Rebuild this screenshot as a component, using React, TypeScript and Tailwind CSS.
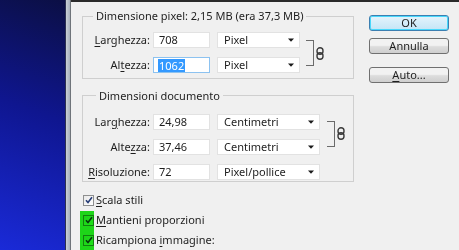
import type { ReactNode } from 'react'

const font = { fontFamily: '"Noto Sans", "Open Sans", sans-serif' }

function U({ children }: { children: ReactNode }) {
  return <span className="underline underline-offset-[2px] decoration-[1px]">{children}</span>
}

function ChainIcon() {
  return (
    <svg width="8" height="13" viewBox="0 0 8 13" className="shrink-0">
      <rect x="1" y="0.8" width="6" height="6.4" rx="3" fill="none" stroke="#3a3a3a" strokeWidth="1.4" />
      <rect x="1" y="5.8" width="6" height="6.4" rx="3" fill="none" stroke="#3a3a3a" strokeWidth="1.4" />
    </svg>
  )
}

function Select({ value, w }: { value: string, w: string }) {
  return (
    <div className={`${w} h-[16px] bg-white border border-[#e2e2e2] flex items-center pl-[6px] pr-[5px] justify-between`}>
      <span>{value}</span>
      <svg width="6" height="4" viewBox="0 0 6 4"><path d="M0 0.5h6L3 3.8z" fill="#1a1a1a" /></svg>
    </div>
  )
}

function Input({ value, focused }: { value: string, focused?: boolean }) {
  return (
    <div className={`w-[57px] h-[16px] bg-white border flex items-center pl-[4px] ${focused ? 'border-[#8cc2f0]' : 'border-[#e2e2e2]'}`}>
      {focused
        ? <span className="bg-[#3399ff] text-white px-[1px] leading-[13px]">{value}</span>
        : <span className="px-[1px]">{value}</span>}
    </div>
  )
}

function Row({ label, value, unit, selectW, focused }: { label: ReactNode, value: string, unit: string, selectW: string, focused?: boolean }) {
  return (
    <div className="flex items-center h-[16px]">
      <div className="w-[70px] text-right pr-[3px]">{label}</div>
      <Input value={value} focused={focused} />
      <div className="w-[7px]" />
      <Select value={unit} w={selectW} />
    </div>
  )
}

function Bracket() {
  return <div className="w-[8px] h-[26px] border-t border-r border-b border-[#6b6b6b]" />
}

function Check({ label }: { label: ReactNode }) {
  return (
    <div className="flex items-center h-[20px]">
      <div className="w-[11px] h-[11px] border border-[#8e8f8f] bg-[linear-gradient(135deg,#e8e8e8,#ffffff)] flex items-center justify-center ml-[1px]">
        <svg width="8" height="8" viewBox="0 0 8 8"><path d="M1 4.2 3 6.5 7 1.2" fill="none" stroke="#263c76" strokeWidth="1.6" /></svg>
      </div>
      <span className="ml-[2px]">{label}</span>
    </div>
  )
}

function Button({ children, primary }: { children: ReactNode, primary?: boolean }) {
  return (
    <div
      className={`h-[16px] w-[80px] rounded-[3px] border flex items-center justify-center ${primary
        ? 'border-[#3c7fb1] bg-[linear-gradient(#e5f4fc,#c4e5f6)] shadow-[inset_0_0_0_1px_#48d8fb]'
        : 'border-[#707070] bg-[linear-gradient(#f2f2f2_45%,#dddddd_55%,#cfcfcf)]'}`}
    >
      {children}
    </div>
  )
}

export default function App() {
  return (
    <div className="flex h-[250px] w-[459px] overflow-hidden text-[11px] leading-[14px] text-[#1e1e1e]" style={font}>
      <div className="w-[65px] bg-[linear-gradient(200deg,#0b0f44_0%,#0f1690_45%,#1a2ad8_100%)]" />
      <div className="w-[6px] flex">
        <div className="w-[1px] bg-[#2c3050]" />
        <div className="w-[4px] bg-[linear-gradient(90deg,#c9d0d8,#a7b0bb)]" />
        <div className="w-[1px] bg-[#6f747a]" />
      </div>
      <div className="flex-1 flex bg-[#f0f0f0] border-t-2 border-[#2a2a2a] pl-[11px]">
        <div className="w-[272px] flex flex-col pt-[7px]">
          <fieldset className="border border-[#cfcfcf] h-[74px]">
            <legend className="ml-[10px] px-[3px]">Dimensione pixel: 2,15 MB (era 37,3 MB)</legend>
            <div className="flex items-center mt-[9px]">
              <div className="flex flex-col gap-[9px]">
                <Row label={<><U>L</U>arghezza:</>} value="708" unit="Pixel" selectW="w-[83px]" />
                <Row label={<>Al<U>t</U>ezza:</>} value="1062" unit="Pixel" selectW="w-[83px]" focused />
              </div>
              <div className="ml-[6px]"><Bracket /></div>
              <div className="ml-[2px] mt-[1px]"><ChainIcon /></div>
            </div>
          </fieldset>
          <fieldset className="border border-[#cfcfcf] h-[99px] mt-[10px]">
            <legend className="ml-[13px] px-[3px]">Dimensioni documento</legend>
            <div className="flex items-start mt-[11px]">
              <div className="flex flex-col gap-[9px]">
                <Row label={<>Lar<U>g</U>hezza:</>} value="24,98" unit="Centimetri" selectW="w-[103px]" />
                <Row label={<>Alte<U>z</U>za:</>} value="37,46" unit="Centimetri" selectW="w-[103px]" />
                <Row label={<><U>R</U>isoluzione:</>} value="72" unit="Pixel/pollice" selectW="w-[103px]" />
              </div>
              <div className="ml-[7px] mt-[7px]"><Bracket /></div>
              <div className="ml-[2px] mt-[13px]"><ChainIcon /></div>
            </div>
          </fieldset>
          <div className="mt-[8px] flex flex-col">
            <Check label={<><U>S</U>cala stili</>} />
            <div className="relative">
              <Check label={<><U>M</U>antieni proporzioni</>} />
              <Check label={<>Ricampiona <U>i</U>mmagine:</>} />
              <div className="absolute left-[-2px] top-[1px] w-[14px] h-[40px] bg-[#1fe31a] mix-blend-multiply blur-[0.6px]" />
            </div>
          </div>
        </div>
        <div className="ml-[15px] w-[80px] flex flex-col pt-[13px]">
          <Button primary>OK</Button>
          <div className="h-[7px]" />
          <Button>Annulla</Button>
          <div className="h-[13px]" />
          <Button><span><U>A</U>uto...</span></Button>
        </div>
      </div>
    </div>
  )
}
